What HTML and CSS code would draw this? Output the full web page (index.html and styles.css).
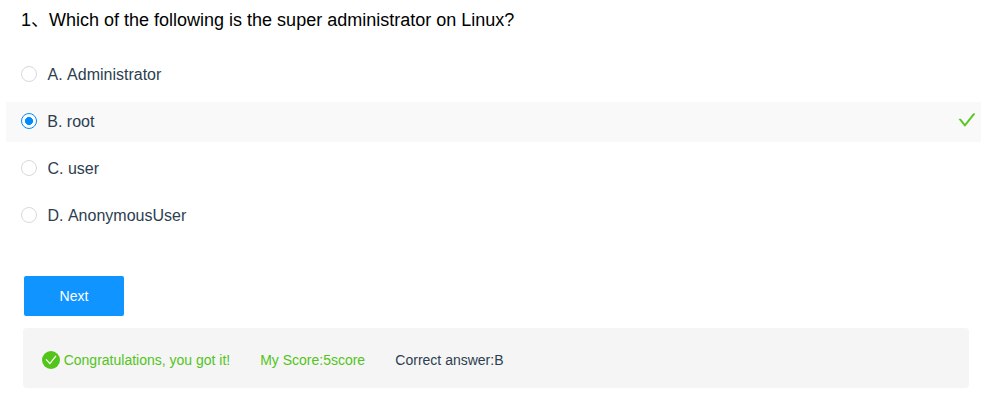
FILE: index.html
```html
<!DOCTYPE html>
<html lang="en">
<head>
<meta charset="utf-8">
<title>Quiz</title>
<link rel="stylesheet" href="styles.css">
</head>
<body>
<main class="quiz">
  <h1 class="question">1、Which of the following is the super administrator on Linux?</h1>
  <div class="options">
    <div class="option"><span class="radio"></span><span>A. Administrator</span></div>
    <div class="option selected"><span class="radio"></span><span>B. root</span>
      <svg class="tick" viewBox="0 0 1024 1024"><path d="M912 190h-69.900c-9.800 0-19.100 4.500-25.100 12.200L404.700 724.500 207 474a32 32 0 0 0-25.100-12.200H112c-6.700 0-10.400 7.700-6.300 12.900l273.900 347c12.800 16.200 37.400 16.200 50.300 0l488.400-618.900c4.100-5.100.4-12.800-6.300-12.800z"/></svg>
    </div>
    <div class="option"><span class="radio"></span><span>C. user</span></div>
    <div class="option"><span class="radio"></span><span>D. AnonymousUser</span></div>
  </div>
  <button class="next">Next</button>
  <div class="result">
    <svg class="badge" viewBox="0 0 18 18"><circle cx="9" cy="9" r="9"/><path d="M4 8.400l3.900 4.200 6.100-7.800"/></svg>
    <span class="good message">Congratulations, you got it!</span>
    <span class="good score">My Score:5score</span>
    <span>Correct answer:B</span>
  </div>
</main>
</body>
</html>
```
FILE: styles.css
```css
* { box-sizing: border-box; }
body { margin: 0; background: #fff; color: #2c3e50; font: 16px/40px "Liberation Sans", "Noto Sans CJK SC", sans-serif; }
.quiz { padding: 0 11px 0 6px; }
.question { margin: 0; padding: 0 15px; height: 55px; font-size: 18px; font-weight: 400; color: #000; }
.options { display: grid; gap: 7px; font-kerning: none; }
.option { display: flex; align-items: center; height: 40px; padding: 0 4px 0 15px; }
.option.selected { background: #f9f9f9; }
.radio { width: 16px; height: 16px; margin: 0 10.500px 2px 0; border: 1px solid #d9d9d9; border-radius: 50%; background: #fff; }
.selected .radio { margin-right: 10.300px; border-color: #008cff; background: radial-gradient(circle, #008cff 3.700px, #fff 4.300px); }
.tick { width: 20px; height: 20px; margin: 0 0 4px auto; fill: #52c41a; stroke: #52c41a; stroke-width: 24; }
.next { display: block; width: 100px; height: 40px; margin: 40px 0 12px 18px; padding: 0; border: 0; border-radius: 2px; background: #1094ff; color: #fff; font: 14px "Liberation Sans", sans-serif; }
.result { display: flex; align-items: center; height: 60px; margin: 0 12px 0 17px; padding: 4px 19px 0; border-radius: 4px; background: #f5f5f5; font-size: 14px; }
.badge { width: 18px; height: 18px; margin-right: 3.700px; fill: #52c41a; }
.badge path { fill: none; stroke: #fff; stroke-width: 1.300; }
.good { color: #52c41a; }
.message { margin-right: 29.900px; }
.score { margin-right: 30.200px; }
```
